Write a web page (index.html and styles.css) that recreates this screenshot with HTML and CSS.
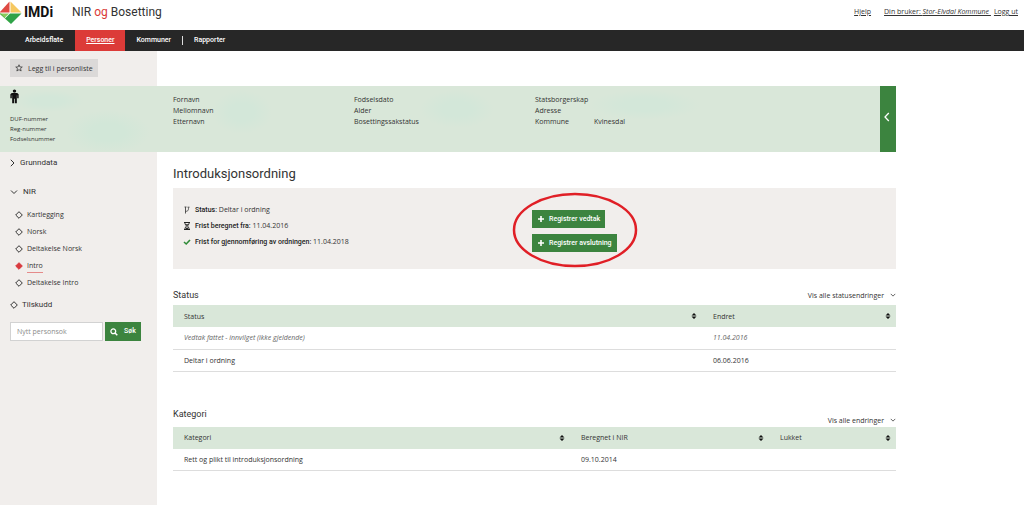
FILE: index.html
```html
<!DOCTYPE html>
<html lang="no">
<head>
<meta charset="utf-8">
<meta name="viewport" content="width=device-width, initial-scale=1">
<title>NIR og Bosetting</title>
<link rel="stylesheet" href="styles.css">
</head>
<body>
<svg class="defs" width="0" height="0" aria-hidden="true">
  <symbol id="diamond" viewBox="0 0 8 8"><path d="M4 .7 7.3 4 4 7.3 .7 4Z" stroke-width="1"/></symbol>
  <symbol id="sort" viewBox="0 0 6 8"><path d="M3 1 5.500 3.500H.5ZM3 7 .5 4.500H5.500Z"/></symbol>
  <symbol id="plus" viewBox="0 0 8 8"><path d="M3.200 1h1.600v2.200h2.200v1.600H4.800v2.200H3.200V4.800H1V3.200h2.200Z"/></symbol>
  <symbol id="down" viewBox="0 0 8 8"><path d="M1 2.500 4 5.500 7 2.500" fill="none" stroke="currentColor"/></symbol>
</svg>

<header class="top">
  <div class="brand">
    <svg class="logo" viewBox="0 0 24 24" aria-hidden="true">
      <path fill="#df4a43" d="M9.500 .5V11.500H-.5Z"/>
      <path fill="#f6c860" d="M10.500 .5 21.500 11.500H10.500Z"/>
      <path fill="#8bcb5c" d="M-.5 12.500H9L4.500 17Z"/>
      <path fill="#2fa348" d="M10 12.500H21.500L11 23 5 17.500Z"/>
      <path fill="#57b650" d="M-.5 12.500H1L11 23 5 17.500Z"/>
    </svg>
    <span class="brand-name">IMDi</span>
    <span class="app-name">NIR <em>og</em> Bosetting</span>
  </div>
  <div class="user-links">
    <a href="#" class="help">Hjelp</a>
    <a href="#">Din bruker: <i>Stor-Elvdal Kommune&nbsp;</i></a>
    <a href="#">Logg ut</a>
  </div>
</header>

<nav class="menu">
  <a href="#">Arbeidsflate</a>
  <a href="#" class="current">Personer</a>
  <a href="#">Kommuner</a>
  <span class="divider"></span>
  <a href="#">Rapporter</a>
</nav>

<div class="page">
  <div class="side-top">
    <button class="add" type="button">
      <svg class="i8" viewBox="0 0 16 16"><path d="M8 1.500 9.900 6H14.500L11 9.200 12.300 14 8 11.300 3.700 14 5 9.200 1.500 6H6.100Z" fill="none" stroke="#333" stroke-width="1.500"/></svg>
      Legg til i personliste
    </button>
  </div>

  <section class="person">
    <div class="ids">
      <svg class="man" viewBox="0 0 10 16"><circle cx="5" cy="2" r="1.900"/><path d="M2 4.200H8L9.600 5.500V10H8V6.500H7.600V15.500H5.400V10.500H4.600V15.500H2.400V6.500H2V10H.4V5.500Z"/></svg>
      <span>DUF-nummer</span><span>Reg-nummer</span><span>Fodselsnummer</span>
    </div>
    <div class="facts">
      <div><span>Fornavn</span><span>Mellomnavn</span><span>Etternavn</span></div>
      <div><span>Fodselsdato</span><span>Alder</span><span>Bosettingssakstatus</span></div>
      <div class="pairs"><span>Statsborgerskap</span><span>Adresse</span><span>Kommune</span><span class="value">Kvinesdal</span></div>
    </div>
    <button class="collapse" type="button" aria-label="Skjul">
      <svg viewBox="0 0 8 10"><path d="M5.800 1 2 5 5.800 9" fill="none" stroke="#fff" stroke-width="1.300"/></svg>
    </button>
  </section>

  <aside class="side">
    <a class="group" href="#"><svg class="i8" viewBox="0 0 8 8"><path d="M.8 .8 4 4 .8 7.200" fill="none" stroke="currentColor"/></svg>Grunndata</a>
    <a class="group nir" href="#"><svg class="i8"><use href="#down"/></svg>NIR</a>
    <ul class="sub">
      <li><a href="#"><svg class="i8 dia"><use href="#diamond"/></svg><span>Kartlegging</span></a></li>
      <li><a href="#"><svg class="i8 dia"><use href="#diamond"/></svg><span>Norsk</span></a></li>
      <li><a href="#"><svg class="i8 dia"><use href="#diamond"/></svg><span>Deltakelse Norsk</span></a></li>
      <li><a href="#" class="active"><svg class="i8 dia"><use href="#diamond"/></svg><span>Intro</span></a></li>
      <li><a href="#"><svg class="i8 dia"><use href="#diamond"/></svg><span>Deltakelse Intro</span></a></li>
    </ul>
    <a class="group tilskudd" href="#"><svg class="i8 dia"><use href="#diamond"/></svg>Tilskudd</a>
    <form class="search">
      <input type="text" placeholder="Nytt personsok" aria-label="Nytt personsok">
      <button class="green" type="button"><svg class="i8" viewBox="0 0 8 8"><circle cx="3.300" cy="3.300" r="2.400" fill="none" stroke="#fff" stroke-width="1.300"/><path d="M5 5 7.300 7.300" stroke="#fff" stroke-width="1.500"/></svg>Søk</button>
    </form>
  </aside>

  <main class="main">
    <h1>Introduksjonsordning</h1>
    <section class="panel">
      <ul class="facts-list">
        <li><svg class="i8" viewBox="0 0 8 8"><path d="M2.500 1V7.500M2.500 5.500C5.500 5 5.500 4 5.500 1.500M1.500 1H3.500M4.500 1.200H6.500" fill="none" stroke="#444" stroke-width=".9"/></svg><span><b>Status:</b> Deltar i ordning</span></li>
        <li><svg class="i8" viewBox="0 0 8 8"><path d="M1 .5H7M1 7.500H7" stroke="#222"/><path d="M2 1V2L3.500 4 2 6V7M6 1V2L4.500 4 6 6V7" fill="none" stroke="#222" stroke-width=".9"/><path d="M2.500 7 4 5 5.500 7ZM2.500 2.200H5.500L4 4Z" fill="#222"/></svg><span><b>Frist beregnet fra:</b> 11.04.2016</span></li>
        <li><svg class="i8" viewBox="0 0 8 8"><path d="M1 4 3.200 6 7 2" fill="none" stroke="#2f8a37" stroke-width="1.600"/></svg><span><b>Frist for gjennomføring av ordningen:</b> 11.04.2018</span></li>
      </ul>
      <div class="actions">
        <button class="green" type="button"><svg class="i8"><use href="#plus"/></svg>Registrer vedtak</button>
        <button class="green" type="button"><svg class="i8"><use href="#plus"/></svg>Registrer avslutning</button>
        <svg class="ring" viewBox="0 0 126 76" aria-hidden="true"><ellipse cx="63" cy="38" rx="61" ry="36" fill="none" stroke="#e01f26" stroke-width="2.500"/></svg>
      </div>
    </section>

    <section class="block">
      <div class="block-head"><h2>Status</h2><a href="#">Vis alle statusendringer<svg class="i6"><use href="#down"/></svg></a></div>
      <table class="status">
        <thead><tr>
          <th class="wide"><div>Status<svg class="sort"><use href="#sort"/></svg></div></th>
          <th><div>Endret<svg class="sort"><use href="#sort"/></svg></div></th>
        </tr></thead>
        <tbody>
          <tr class="old"><td>Vedtak fattet - innvilget (ikke gjeldende)</td><td>11.04.2016</td></tr>
          <tr><td>Deltar i ordning</td><td>06.06.2016</td></tr>
        </tbody>
      </table>
    </section>

    <section class="block category">
      <div class="block-head"><h2>Kategori</h2><a href="#">Vis alle endringer<svg class="i6"><use href="#down"/></svg></a></div>
      <table class="kategori">
        <thead><tr>
          <th class="first"><div>Kategori<svg class="sort"><use href="#sort"/></svg></div></th>
          <th class="second"><div>Beregnet i NIR<svg class="sort"><use href="#sort"/></svg></div></th>
          <th class="third"><div>Lukket<svg class="sort"><use href="#sort"/></svg></div></th>
        </tr></thead>
        <tbody><tr><td>Rett og plikt til introduksjonsordning</td><td>09.10.2014</td><td></td></tr></tbody>
      </table>
    </section>
  </main>
</div>
</body>
</html>
```

FILE: styles.css
```css
* { box-sizing: border-box; }
body {
  margin: 0;
  min-height: 100vh;
  display: flex;
  flex-direction: column;
  font: 7px/11px "Open Sans", "Noto Sans", sans-serif;
  color: #333;
  background: #fff;
}
a { color: inherit; text-decoration: none; }
ul { list-style: none; margin: 0; padding: 0; }
h1, h2 { margin: 0; font-weight: 400; }
button, input { font: inherit; border: 0; border-radius: 0; margin: 0; }
button { cursor: pointer; }
svg { flex: none; display: block; }
.defs { position: absolute; }
.i8 { width: 8px; height: 8px; }
.i6 { width: 6px; height: 6px; }

h1, h2, .brand, .menu, .green, .facts-list b, .group { font-family: Roboto, sans-serif; }

.top { display: flex; justify-content: space-between; height: 30px; padding-right: 6px; }
.brand { display: flex; align-items: center; height: 25px; }
.logo { width: 24px; height: 24px; }
.brand-name { font-size: 14px; font-weight: 700; color: #111; width: 48px; }
.app-name { font-size: 12px; }
.app-name em { font-style: normal; color: #d93a38; }
.user-links { display: flex; gap: 3px; padding-top: 6px; }
.user-links a { text-decoration: underline; }
.user-links .help { margin-right: 10px; }

.menu {
  display: flex;
  align-items: stretch;
  height: 21px;
  padding-left: 14px;
  background: #272727;
  color: #fff;
  font-weight: 500;
  line-height: 21px;
}
.menu a { padding: 0 11px; }
.menu .current { margin-left: 1px; background: #dc3b38; text-decoration: underline; }
.divider { width: 1px; margin: 6px 0; background: #ddd; }

.page {
  flex: 1;
  display: grid;
  grid-template-columns: 157px minmax(0, 1fr);
  grid-template-rows: auto auto 1fr;
  max-width: 896px;
  width: 100%;
}
.side-top { background: #f1eeec; padding: 8px 10px 9px; }
.add {
  display: flex;
  align-items: center;
  gap: 5px;
  height: 18px;
  padding: 0 5px;
  background: #dbd9d8;
  color: #333;
}

.person {
  grid-column: 1 / -1;
  display: flex;
  min-height: 66px;
  background:
    radial-gradient(closest-side, #d2e7d8 40%, transparent) 66px 24px / 84px 44px no-repeat,
    radial-gradient(closest-side, #d3e7d9 40%, transparent) 14px 4px / 70px 22px no-repeat,
    radial-gradient(closest-side, #d3e7d9 40%, transparent) 212px 4px / 60px 44px no-repeat,
    radial-gradient(closest-side, #d3e7d9 40%, transparent) 420px 4px / 74px 38px no-repeat,
    radial-gradient(closest-side, #d3e7d9 40%, transparent) 590px 4px / 110px 30px no-repeat,
    #d9e7d9;
}
.ids { width: 173px; padding: 3px 10px; display: flex; flex-direction: column; font-size: 6px; line-height: 10px; }
.man { width: 9px; height: 15px; margin-bottom: 10px; fill: #111; }
.facts { flex: 1; display: grid; grid-template-columns: repeat(2, minmax(0, 181px)) 1fr; padding-top: 8px; }
.facts span { display: block; }
.facts .pairs { display: grid; grid-template-columns: 59px 1fr; align-content: start; }
.pairs span { grid-column: 1; white-space: nowrap; }
.pairs .value { grid-column: 2; grid-row: 3; }
.collapse { width: 16px; padding: 0 3px; background: #3c843f; }
.collapse svg { width: 8px; height: 10px; margin-bottom: 5px; }

.side { background: #f1eeec; padding: 5px 10px; }
.group { display: flex; align-items: center; gap: 2px; font-size: 8px; line-height: 12px; }
.group.nir { margin: 17px 0 8px; gap: 5px; }
.group.tilskudd { margin-top: 8px; gap: 4px; }
.dia { fill: none; stroke: #333; }
.sub { padding-left: 5px; }
.sub a { display: flex; align-items: center; gap: 4px; height: 17px; }
.sub .active .dia { fill: #d93a3f; stroke: #d93a3f; }
.sub .active span { border-bottom: 1px solid #e58a8a; line-height: 13px; }
.search { display: flex; gap: 2px; margin-top: 11px; }
.search input { width: 93px; height: 19px; padding: 0 6px; border: 1px solid #d2d2d2; background: #fff; }
.search input::placeholder { color: #8b8b8b; opacity: 1; }
.green {
  display: flex;
  align-items: center;
  gap: 4px;
  height: 18px;
  padding: 0 5px;
  background: #3c843f;
  color: #fff;
  fill: #fff;
  font-weight: 500;
}
.search .green { height: 19px; gap: 6px; }

.main { padding: 14px 0 20px 16px; }
h1 { font-size: 13px; line-height: 16px; }
.panel { display: flex; margin-top: 6px; min-height: 81px; padding: 14px 10px; background: #f1eeec; }
.facts-list { width: 349px; }
.facts-list li { display: flex; align-items: center; gap: 4px; height: 16px; }
.facts-list b { font-weight: 500; color: #222; }
.actions { position: relative; display: flex; flex-direction: column; align-items: flex-start; gap: 6px; padding-top: 8px; }
.ring { position: absolute; left: -20px; top: -10px; width: 126px; height: 76px; pointer-events: none; }

.block { margin-top: 18px; }
.category { margin-top: 36px; }
.block-head { display: flex; justify-content: space-between; align-items: center; height: 16px; margin-bottom: 2px; }
.category .block-head { height: 18px; margin-bottom: 1px; align-items: flex-end; }
.category h2 { align-self: flex-start; }
h2 { font-size: 9px; line-height: 12px; }
.block-head a { display: flex; align-items: center; gap: 6px; }

table { width: 100%; border-collapse: collapse; table-layout: fixed; }
th { height: 22px; padding: 0 5px 0 11px; background: #d9e7d9; font-weight: 400; text-align: left; }
th div { display: flex; justify-content: space-between; align-items: center; }
td { height: 22px; padding: 0 11px; border-bottom: 1px solid #ddd; }
.wide { width: 529px; }
.second { width: 199px; }
.third { width: 127px; }
.sort { width: 6px; height: 8px; fill: #111; }
.old { font-style: italic; color: #666; }
```
